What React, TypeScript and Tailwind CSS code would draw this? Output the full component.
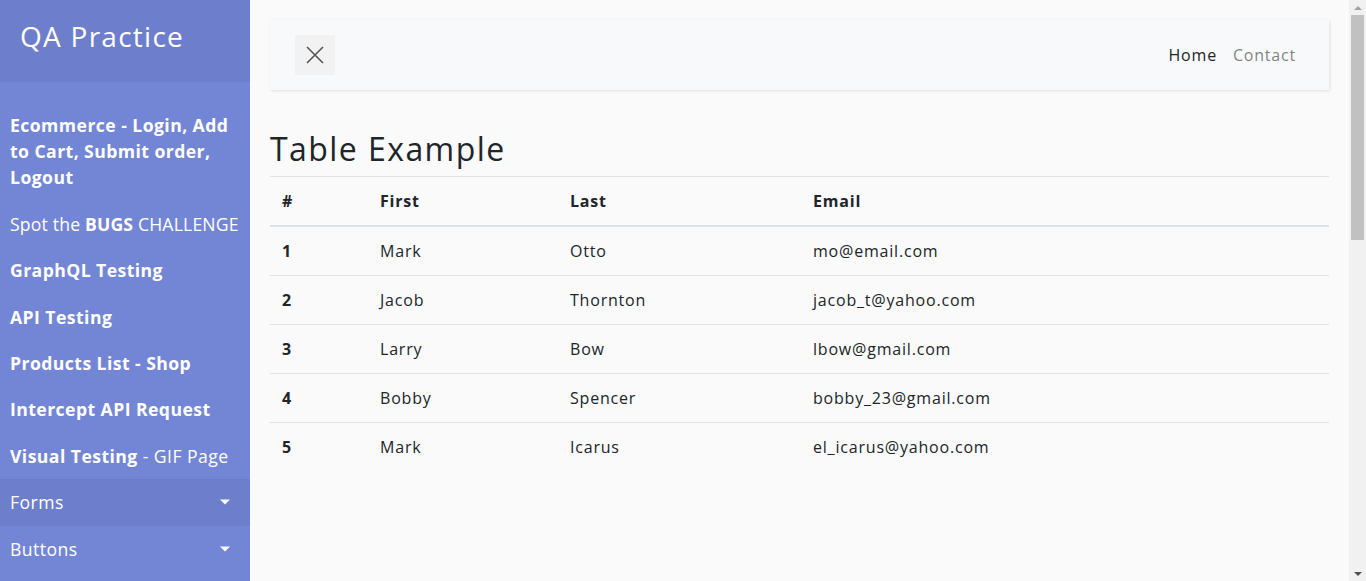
import React from 'react';

interface NavItem {
  bold?: string;
  rest?: string;
  pre?: string;
  dropdown?: boolean;
  active?: boolean;
  tight?: boolean;
}

const navItems: NavItem[] = [
  { bold: 'Ecommerce - Login, Add to Cart, Submit order, Logout' },
  { pre: 'Spot the ', bold: 'BUGS', rest: ' CHALLENGE', tight: true },
  { bold: 'GraphQL Testing' },
  { bold: 'API Testing' },
  { bold: 'Products List - Shop' },
  { bold: 'Intercept API Request' },
  { bold: 'Visual Testing', rest: ' - GIF Page' },
  { rest: 'Forms', dropdown: true, active: true },
  { rest: 'Buttons', dropdown: true },
];

const rows = [
  ['1', 'Mark', 'Otto', 'mo@email.com'],
  ['2', 'Jacob', 'Thornton', 'jacob_t@yahoo.com'],
  ['3', 'Larry', 'Bow', 'lbow@gmail.com'],
  ['4', 'Bobby', 'Spencer', 'bobby_23@gmail.com'],
  ['5', 'Mark', 'Icarus', 'el_icarus@yahoo.com'],
];

export default function App() {
  return (
    <div
      className="flex h-[581px] overflow-hidden bg-[#fafafa] text-[#212529]"
      style={{ fontFamily: '"Open Sans", "Liberation Sans", sans-serif' }}
    >
      {/* Sidebar */}
      <nav className="w-[250px] shrink-0 bg-[#7386d5] text-white">
        <div className="bg-[#6d7fcc] p-5">
          <h3 className="mb-2 text-[28px] leading-[1.2] font-medium tracking-[0.045em]">QA Practice</h3>
        </div>
        <ul className="pt-5">
          {navItems.map((item, i) => (
            <li key={i} className={item.active ? 'bg-[#6d7fcc]' : ''}>
              <a
                className={`relative block p-[10px] text-[17.6px] leading-[1.5] font-normal ${
                  item.tight ? 'whitespace-nowrap tracking-[0.01em]' : 'tracking-[0.025em]'
                }`}
              >
                {item.pre}
                {item.bold && <span className="font-bold">{item.bold}</span>}
                {item.rest}
                {item.dropdown && (
                  <span className="absolute top-1/2 right-5 -translate-y-1/2 border-x-[5px] border-t-[5px] border-x-transparent border-t-white" />
                )}
              </a>
            </li>
          ))}
        </ul>
      </nav>

      {/* Content */}
      <main className="min-w-0 flex-1 p-5">
        <div className="mb-10 flex items-center justify-between bg-[#f8f9fa] px-[25px] py-[15px] shadow-[1px_1px_3px_rgba(0,0,0,0.1)]">
          <button className="flex h-10 w-10 items-center justify-center bg-[#f2f2f2]">
            <svg width="20" height="20" viewBox="0 0 20 20" fill="none" stroke="#555" strokeWidth="1.6">
              <path d="M2 2l16 16M18 2L2 18" />
            </svg>
          </button>
          <div className="flex items-center gap-4 pr-[8px] text-[16px] tracking-[0.05em]">
            <a className="text-[#212529]">Home</a>
            <a className="text-[rgba(0,0,0,0.5)]">Contact</a>
          </div>
        </div>

        <h2 className="mb-2 text-[32px] leading-[1.2] font-normal tracking-[0.045em]">Table Example</h2>
        <table className="w-full border-collapse text-left text-[16px] leading-6 tracking-[0.05em]">
          <thead>
            <tr className="border-t border-b-2 border-t-[#dee2e6] border-b-[#dee2e6]">
              <th className="w-[98px] px-3 py-3 font-bold">#</th>
              <th className="w-[190px] px-3 py-3 font-bold">First</th>
              <th className="w-[243px] px-3 py-3 font-bold">Last</th>
              <th className="px-3 py-3 font-bold">Email</th>
            </tr>
          </thead>
          <tbody>
            {rows.map((r, i) => (
              <tr key={r[0]} className={i < rows.length - 1 ? 'border-b border-[#dee2e6]' : ''}>
                <th className="px-3 py-3 font-bold">{r[0]}</th>
                <td className="px-3 py-3">{r[1]}</td>
                <td className="px-3 py-3">{r[2]}</td>
                <td className="px-3 py-3">{r[3]}</td>
              </tr>
            ))}
          </tbody>
        </table>
      </main>

      {/* Scrollbar */}
      <div className="flex w-[17px] shrink-0 flex-col items-center bg-[#f1f1f1]">
        <div className="flex h-[15px] items-center justify-center">
          <span className="border-x-[4px] border-b-[4px] border-x-transparent border-b-[#a3a3a3]" />
        </div>
        <div className="h-[225px] w-[13px] bg-[#c1c1c1]" />
        <div className="flex-1" />
        <div className="flex h-[15px] items-center justify-center">
          <span className="border-x-[4px] border-t-[4px] border-x-transparent border-t-[#505050]" />
        </div>
      </div>
    </div>
  );
}
